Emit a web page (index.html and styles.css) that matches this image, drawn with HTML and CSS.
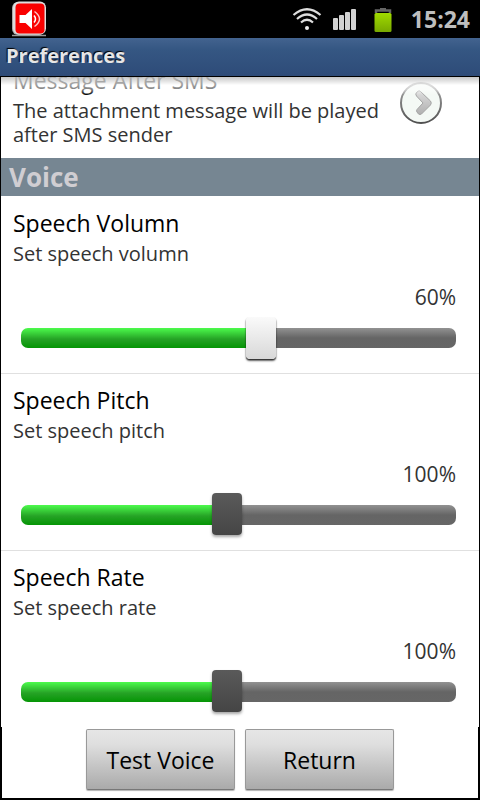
FILE: index.html
```html
<!DOCTYPE html>
<html lang="en">
<head>
<meta charset="utf-8">
<meta name="viewport" content="width=device-width, initial-scale=1">
<title>Preferences</title>
<link rel="stylesheet" href="styles.css">
</head>
<body>
<div class="status">
  <svg class="app-icon" width="36" height="36" viewBox="0 0 36 36" aria-hidden="true">
    <path d="M0 34.500h34" stroke="#999" stroke-width="1.500"/>
    <rect x="0" y="1" width="33" height="33" rx="6" fill="#aaa"/>
    <rect x="1" y=".5" width="33" height="33" rx="6" fill="#ddd"/>
    <rect x="3.500" y="2.500" width="29" height="30" rx="4" fill="#f90000"/>
    <path d="M7.500 14h6l6.500-6v20l-6.500-6h-6z" fill="#fff"/>
    <path d="M22 14.500q3 3.500 0 7" fill="none" stroke="#fff" stroke-width="1.500"/>
    <path d="M22.500 10.500q10 7.500 0 15" fill="none" stroke="#ffc4c4" stroke-width="1.500"/>
  </svg>
  <div class="tray">
    <svg class="wifi" width="30" height="24" viewBox="0 0 30 24" aria-hidden="true">
      <g fill="none" stroke="#ddd" stroke-width="2.200">
        <path d="M1.500 8Q15-3.500 28.500 8"/>
        <path d="M5 12Q15 3 25 12"/>
        <path d="M9 15.500Q15 10 21 15.500"/>
      </g>
      <circle cx="15" cy="21" r="2" fill="#eee"/>
    </svg>
    <svg class="signal" width="24" height="22" viewBox="0 0 24 22" aria-hidden="true">
      <g fill="#d2d2d2">
        <rect y="10" width="5" height="12" rx="1"/>
        <rect x="6" y="7" width="5" height="15" rx="1"/>
        <rect x="12" y="4" width="5" height="18" rx="1"/>
        <rect x="18" y="1" width="5" height="21" rx="1"/>
      </g>
    </svg>
    <svg class="battery" width="18" height="25" viewBox="0 0 18 25" aria-hidden="true">
      <defs><linearGradient id="charge" x1="0" y1="0" x2="0" y2="1"><stop offset="0" stop-color="#a0db00"/><stop offset="1" stop-color="#78a800"/></linearGradient></defs>
      <path d="M2 6V3.500h14V6" fill="none" stroke="#666" stroke-width="2.500"/>
      <rect x="6" y="1" width="6" height="2" fill="#666"/>
      <rect x=".5" y="6" width="17" height="19" rx="1.500" fill="url(#charge)"/>
    </svg>
    <span class="clock">15:24</span>
  </div>
</div>
<header class="title-bar"><h1>Preferences</h1></header>
<main class="list">
  <section class="item link-item">
    <div class="item-text">
      <h3>Message After SMS</h3>
      <p>The attachment message will be played after SMS sender</p>
    </div>
    <button class="more" aria-label="Open Message After SMS">
      <svg width="44" height="44" viewBox="0 0 44 44" aria-hidden="true">
        <defs>
          <linearGradient id="ring" x1="0" y1="0" x2="0" y2="1"><stop offset="0" stop-color="#aaa"/><stop offset="1" stop-color="#505050"/></linearGradient>
          <linearGradient id="arrow" x1="0" y1="0" x2="0" y2="1"><stop offset="0" stop-color="#ddd"/><stop offset="1" stop-color="#b0b0b0"/></linearGradient>
        </defs>
        <circle cx="22" cy="22" r="20" fill="#f4f9f5" stroke="url(#ring)" stroke-width="2"/>
        <path d="M17.500 11.500l2-1.500q1-.5 2 .5l10 9.500q1.500 2 0 4l-9 9q-1.500 1-3 0l-1.500-2q-1-1 0-2.500l6-6.500-6.500-7q-1.500-2 0-3.500z" fill="url(#arrow)" stroke="#a4a4a4" stroke-width="1"/>
      </svg>
    </button>
  </section>
  <h2 class="section-title">Voice</h2>
  <section class="item">
    <h3><label for="volume">Speech Volumn</label></h3>
    <p>Set speech volumn</p>
    <output class="value" for="volume">60%</output>
    <input class="slider active" id="volume" type="range" min="0" max="108" value="60" style="--fill:55%">
  </section>
  <section class="item">
    <h3><label for="pitch">Speech Pitch</label></h3>
    <p>Set speech pitch</p>
    <output class="value" for="pitch">100%</output>
    <input class="slider" id="pitch" type="range" min="0" max="212" value="100" style="--fill:47%">
  </section>
  <section class="item">
    <h3><label for="rate">Speech Rate</label></h3>
    <p>Set speech rate</p>
    <output class="value" for="rate">100%</output>
    <input class="slider" id="rate" type="range" min="0" max="212" value="100" style="--fill:47%">
  </section>
</main>
<footer class="actions">
  <button class="btn">Test Voice</button>
  <button class="btn">Return</button>
</footer>
</body>
</html>
```

FILE: styles.css
```css
* { box-sizing: border-box; }

body {
  margin: 0;
  height: 100vh;
  display: flex;
  flex-direction: column;
  overflow: hidden;
  background: #000;
  color: #000;
  font-family: "Open Sans", "Noto Sans", sans-serif;
}

h1, h2, h3, p { margin: 0; }

.status {
  flex: none;
  display: flex;
  align-items: center;
  justify-content: space-between;
  height: 38px;
  padding: 0 10px 0 12px;
}

.tray { display: flex; align-items: center; }
.wifi { margin-right: 11px; }
.signal { margin-right: 17px; }
.battery { margin-right: 19px; }

.clock {
  color: #bebebe;
  font-size: 23px;
  font-weight: 700;
  line-height: 38px;
}

.title-bar {
  flex: none;
  height: 38px;
  padding: 0 6px;
  background: linear-gradient(#43638f, #355783 30%, #2e4b78);
}

.title-bar h1 {
  color: #e6e6e6;
  font-size: 20px;
  font-weight: 700;
  line-height: 36px;
  text-shadow: -1px -1px 1px #000;
}

.list {
  position: relative;
  flex: 1;
  min-height: 0;
  display: flex;
  flex-direction: column;
  justify-content: flex-end;
  overflow: hidden;
  margin: 1px 1px 0;
  background: #fff;
}

.list::before {
  content: "";
  position: absolute;
  inset: 0 0 auto;
  height: 18px;
  background:
    linear-gradient(rgba(0, 0, 0, .22), transparent 45%),
    linear-gradient(rgba(255, 255, 255, .85), rgba(255, 255, 255, .5) 70%, transparent);
}

.item {
  flex: none;
  display: flex;
  flex-direction: column;
  padding: 10px 23px 14px 12px;
  border-bottom: 1px solid #e0e0e0;
}

.item:last-child { border-bottom: 0; }

.item h3 {
  margin-bottom: 3px;
  font-size: 23px;
  font-weight: 400;
  line-height: 32px;
}

.item p {
  color: #333;
  font-size: 20px;
  line-height: 24px;
}

.link-item {
  flex-direction: row;
  align-items: center;
  padding: 10px 36px 11px 12px;
  border-bottom: 0;
}

.item-text { flex: 1; }

.more {
  flex: none;
  height: 44px;
  margin-bottom: 6px;
  padding: 0;
  border: 0;
  background: none;
}

.more svg { display: block; }

.section-title {
  flex: none;
  margin-bottom: 1px;
  padding-left: 8px;
  background: #768692;
  color: #d0ced2;
  font-size: 26px;
  font-weight: 700;
  line-height: 38px;
}

.value {
  margin-top: 15px;
  color: #333;
  font-size: 21px;
  line-height: 32px;
  text-align: right;
}

.slider {
  appearance: none;
  align-self: stretch;
  height: 42px;
  margin: 4px 0 0 8px;
  background: none;
}

.slider::-webkit-slider-runnable-track {
  height: 20px;
  border-radius: 7px;
  background:
    linear-gradient(#4cfb4c, #26a326 55%, #059505) 0 0 / var(--fill) 100% no-repeat,
    linear-gradient(#929292, #656565 50%, #666);
}

.slider::-webkit-slider-thumb {
  appearance: none;
  width: 30px;
  height: 42px;
  margin-top: -12px;
  border-radius: 4px;
  background: linear-gradient(#5a5a5a, #454545);
  box-shadow: 0 2px 3px rgba(0, 0, 0, .35);
}

.slider.active::-webkit-slider-thumb {
  margin-top: -11px;
  background: linear-gradient(#fafafa, #d8d8d8);
  box-shadow: 0 1px 1px #333, 0 2px 2px rgba(0, 0, 0, .6);
}

.actions {
  flex: none;
  display: flex;
  justify-content: center;
  gap: 10px;
  margin: 0 2px 2px;
  padding: 2px 0 8px;
  background: #fff;
}

.btn {
  width: 149px;
  height: 61px;
  padding: 0;
  border: 1px solid #999;
  border-bottom-color: #777;
  border-radius: 2px;
  background: linear-gradient(#e6e6e6, #dedede 25%, #aaa);
  box-shadow: 0 1px 1px rgba(0, 0, 0, .3);
  color: #000;
  font-family: inherit;
  font-size: 23px;
}
```
